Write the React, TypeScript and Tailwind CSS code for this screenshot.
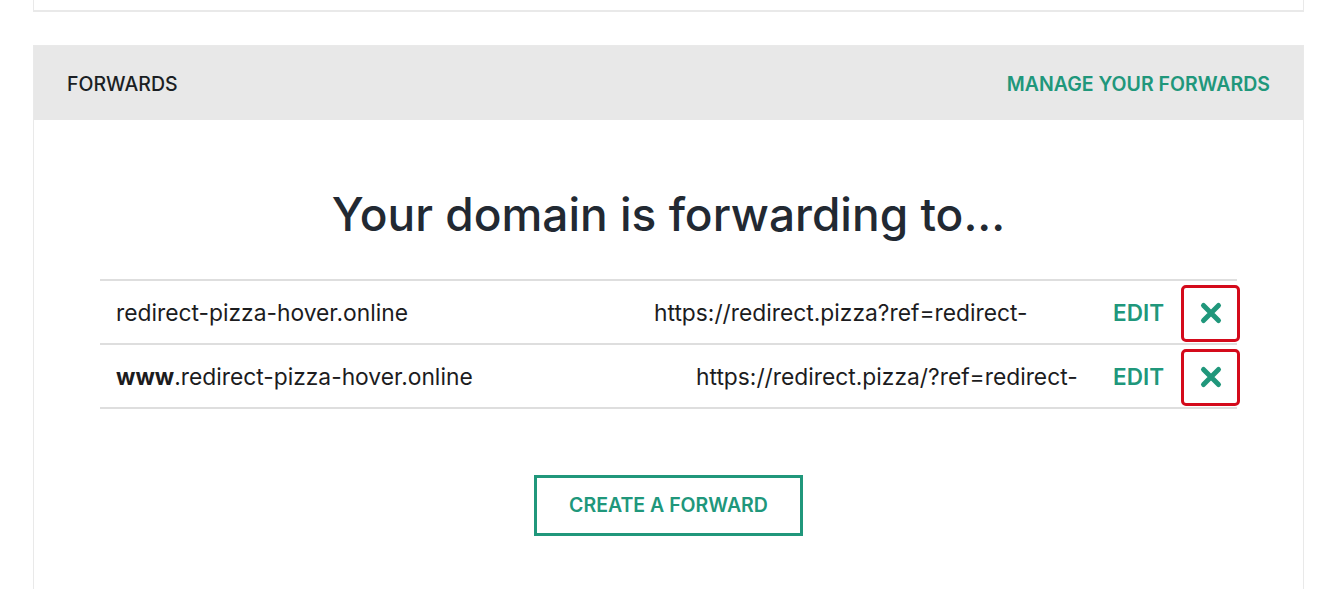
const forwards = [
  {
    sub: '',
    domain: 'redirect-pizza-hover.online',
    target: 'https://redirect.pizza?ref=redirect-',
    targetClass: 'pl-[16px]',
  },
  {
    sub: 'www',
    domain: '.redirect-pizza-hover.online',
    target: 'https://redirect.pizza/?ref=redirect-',
    targetClass: 'pl-[58px]',
  },
];

function CloseIcon() {
  return (
    <svg width="24" height="24" viewBox="0 0 24 24" fill="none" stroke="currentColor" strokeWidth={5} strokeLinecap="round">
      <path d="M4.5 4.5l15 15M19.5 4.5l-15 15" />
    </svg>
  );
}

function ForwardRow({ sub, domain, target, targetClass }: (typeof forwards)[number]) {
  return (
    <div className="flex items-center h-[64px] pt-[2px] border-b-2 border-[#dedede] text-[22.8px] text-[#1c1c1e]">
      <div className="w-[538px] shrink-0 pl-[16px] whitespace-nowrap">
        {sub && <span className="font-bold">{sub}</span>}
        {domain}
      </div>
      <div className={`${targetClass} whitespace-nowrap`}>{target}</div>
      <button className="ml-auto text-[22.5px] font-semibold text-[#20977b]">EDIT</button>
      <button className="ml-[17px] mr-[-3px] w-[59px] h-[57px] shrink-0 flex items-center justify-center border-[3px] border-[#d40a1b] rounded-[5px] text-[#20977b]">
        <CloseIcon />
      </button>
    </div>
  );
}

export default function App() {
  return (
    <div className="min-h-screen bg-white pl-[33px] pr-[40px]" style={{ fontFamily: 'Inter, "Noto Sans", sans-serif' }}>
      <div className="h-[12px] border-x border-b-2 border-[#e9e9e9]" />

      <div className="mt-[33px] border border-[#e9e9e9] pb-[60px]">
        <div className="h-[74px] pt-[4px] bg-[#e8e8e8] flex items-center justify-between px-[33px]">
          <h2 className="text-[19.5px] font-medium text-[#1b1f24]">FORWARDS</h2>
          <a className="text-[19.5px] font-semibold text-[#20977b]">MANAGE YOUR FORWARDS</a>
        </div>

        <div className="px-[66px] pt-[67px]">
          <h1 className="text-center text-[46px] leading-[55px] font-medium text-[#222932]">
            Your domain is forwarding to...
          </h1>

          <div className="mt-[37px] border-t-2 border-[#dedede]">
            {forwards.map((f) => (
              <ForwardRow key={f.sub + f.domain} {...f} />
            ))}
          </div>

          <div className="flex justify-center mt-[66px]">
            <button className="w-[269px] h-[61px] border-[3px] border-[#20977b] text-[19.5px] font-semibold text-[#20977b]">
              CREATE A FORWARD
            </button>
          </div>
        </div>
      </div>
    </div>
  );
}
